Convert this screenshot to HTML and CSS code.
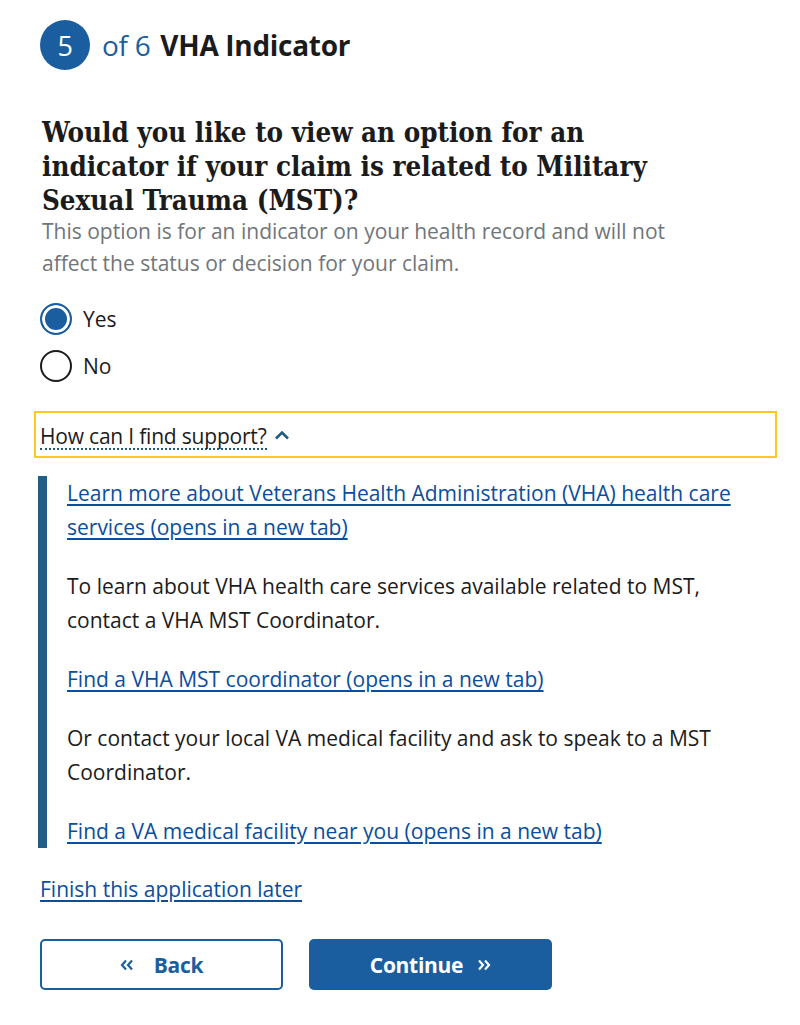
FILE: index.html
```html
<!DOCTYPE html>
<html lang="en">
<head>
<meta charset="utf-8">
<title>VHA Indicator</title>
<link rel="stylesheet" href="styles.css">
</head>
<body>
<main class="page">
  <h2 class="step">
    <span class="step-num">5</span>
    <span class="step-of">of 6</span>
    <span class="step-title">VHA Indicator</span>
  </h2>

  <fieldset class="question">
    <legend class="legend">Would you like to view an option for an indicator if your claim is related to Military Sexual Trauma (MST)?</legend>
    <p class="hint">This option is for an indicator on your health record and will not affect the status or decision for your claim.</p>
    <div class="radios">
      <label class="radio"><span class="dot checked"></span>Yes</label>
      <label class="radio"><span class="dot"></span>No</label>
    </div>
  </fieldset>

  <div class="accordion">
    <button class="acc-trigger"><span class="acc-text">How can I find support?</span>
      <svg class="chev" width="16" height="12" viewBox="0 0 16 12"><path d="M2 9.5 L8 3.5 L14 9.5" fill="none" stroke="currentColor" stroke-width="2.6"/></svg>
    </button>
  </div>

  <div class="info">
    <p><a href="#">Learn more about Veterans Health Administration (VHA) health care services (opens in a new tab)</a></p>
    <p>To learn about VHA health care services available related to MST, contact a VHA MST Coordinator.</p>
    <p><a href="#">Find a VHA MST coordinator (opens in a new tab)</a></p>
    <p>Or contact your local VA medical facility and ask to speak to a MST Coordinator.</p>
    <p><a href="#">Find a VA medical facility near you (opens in a new tab)</a></p>
  </div>

  <p class="later"><a href="#">Finish this application later</a></p>

  <div class="actions">
    <button class="btn btn-back"><svg class="arr arr-l" width="14" height="12" viewBox="0 0 14 12"><path d="M6 1.5 L2 6 L6 10.5 M12 1.5 L8 6 L12 10.5" fill="none" stroke="currentColor" stroke-width="2.2"/></svg>Back</button>
    <button class="btn btn-cont">Continue<svg class="arr arr-r" width="14" height="12" viewBox="0 0 14 12"><path d="M2 1.5 L6 6 L2 10.5 M8 1.5 L12 6 L8 10.5" fill="none" stroke="currentColor" stroke-width="2.2"/></svg></button>
  </div>
</main>
</body>
</html>
```

FILE: styles.css
```css
html, body {
  margin: 0;
  padding: 0;
  background: #fff;
}
body {
  font-family: "Open Sans", "Liberation Sans", sans-serif;
  color: #1b1b1b;
}
.page {
  padding: 20px 23px 0 40px;
}
.step {
  display: flex;
  align-items: center;
  margin: 0;
  height: 50px;
  font-size: 28px;
  font-weight: normal;
  letter-spacing: -0.3px;
}
.step-num {
  width: 50px;
  height: 50px;
  border-radius: 50%;
  background: #1b5e9f;
  color: #fff;
  display: flex;
  align-items: center;
  justify-content: center;
  font-size: 27px;
  margin-right: 12px;
}
.step-of {
  color: #1b5e9f;
  margin-right: 10px;
}
.step-title {
  font-weight: 700;
  color: #1b1b1b;
}
.question {
  border: 0;
  margin: 0;
  padding: 0;
  margin-top: 45px;
}
.legend {
  padding: 0 0 0 2px;
  font-family: "DejaVu Serif Condensed", "DejaVu Serif", serif;
  font-weight: bold;
  font-size: 27.5px;
  line-height: 34px;
  color: #1b1b1b;
  max-width: 640px;
}
.hint {
  margin: -2px 0 0 2px;
  color: #71767a;
  font-size: 21px;
  line-height: 32px;
  max-width: 650px;
}
.radios {
  margin-top: 24px;
  display: flex;
  flex-direction: column;
  gap: 15px;
}
.radio {
  display: flex;
  align-items: center;
  font-size: 21px;
  height: 32px;
}
.dot {
  width: 28px;
  height: 28px;
  border: 2px solid #1b1b1b;
  border-radius: 50%;
  margin-right: 11px;
  box-sizing: content-box;
}
.dot.checked {
  border-color: #1b5e9f;
  background: #1b5e9f;
  box-shadow: inset 0 0 0 3px #fff;
}
.accordion {
  margin: 29px 0 0 -6px;
  border: 2px solid #fac922;
  height: 43px;
  display: flex;
  align-items: center;
}
.acc-trigger {
  background: none;
  border: 0;
  padding: 0 0 0 4px;
  font-family: inherit;
  font-size: 21px;
  letter-spacing: -0.2px;
  color: #1b1b1b;
  display: flex;
  align-items: center;
  cursor: pointer;
}
.acc-text {
  border-bottom: 2px dotted #1c5a7d;
  line-height: 24px;
  padding-top: 4px;
}
.chev {
  color: #1f5b80;
  margin-left: 7px;
}
.info {
  margin: 18px 0 0 -2px;
  border-left: 9px solid #215e86;
  padding: 0 30px 0 20px;
  font-size: 21px;
  line-height: 34px;
}
.info p {
  margin: 0 0 25px;
}
.info p:last-child {
  margin-bottom: 0;
}
a {
  color: #0b4e9c;
  text-decoration: underline;
  text-underline-offset: 3px;
}
.later {
  margin: 24px 0 0;
  font-size: 21px;
  line-height: 34px;
}
.actions {
  display: flex;
  gap: 26px;
  margin-top: 33px;
}
.btn {
  width: 243px;
  height: 51px;
  border-radius: 5px;
  font-family: inherit;
  font-size: 21px;
  font-weight: 700;
  letter-spacing: -0.3px;
  display: flex;
  align-items: center;
  justify-content: center;
  cursor: pointer;
}
.btn-back {
  background: #fff;
  border: 2px solid #1b5e9f;
  color: #1b5e9f;
}
.btn-cont {
  background: #1b5e9f;
  border: 0;
  color: #fff;
}
.arr-l {
  margin-right: 20px;
}
.arr-r {
  margin-left: 14px;
}
```
